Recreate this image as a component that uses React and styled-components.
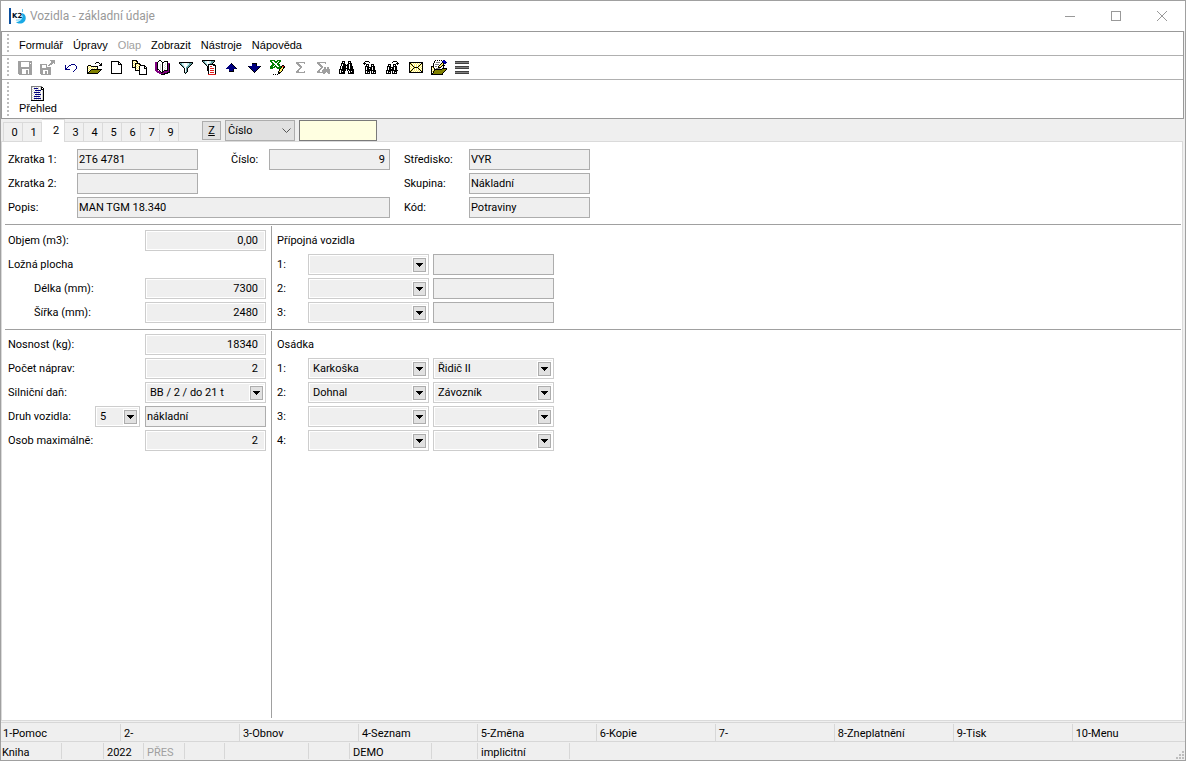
import React from "react";
import styled, { createGlobalStyle, css } from "styled-components";

const GlobalStyle = createGlobalStyle`
  * {
    box-sizing: border-box;
  }

  body {
    margin: 0;
    background: #fff;
    color: #000;
    font-family: Roboto, "DejaVu Sans", sans-serif;
    font-size: 11px;
  }

  button,
  input,
  select {
    margin: 0;
    border-radius: 0;
    color: inherit;
    font: inherit;
  }
`;

// colours of the pixel icons
const palette = {
  K: "#000000",
  W: "#ffffff",
  G: "#a0a0a0",
  D: "#404040",
  M: "#808080",
  N: "#000080",
  B: "#0000d0",
  Y: "#fff060",
  O: "#808000",
  P: "#800080",
  T: "#5f9ea0",
  C: "#c8f0f0",
  R: "#e02020",
  E: "#008000",
  L: "#d8d8d8",
};

const icons = {
  save: [
    "GGGGGGGGGGGGGG",
    "GGG........GGG",
    "GGG........G.G",
    "GGG........GGG",
    "GGG........GGG",
    "GGG........GGG",
    "GGGGGGGGGGGGGG",
    "GGGGGGGGGGGGGG",
    "GGGG.......GGG",
    "GGGG....GG.GGG",
    "GGGG....GG.GGG",
    "GGGG....GG.GGG",
    "GGGG....GG.GGG",
    ".GGGGGGGGGGGGG",
  ],
  saveExit: [
    "..........GGGGG",
    "...........GGGG",
    "...........GGGG",
    "..........GGG.G",
    "GGGGGGG..GGG...",
    "GG....G.GG.....",
    "GG....G........",
    "GG....GGGGG....",
    "GGGGGGGGGGG....",
    "GGGGGGGGGGG....",
    "GGG.....GGG....",
    "GGG..GG.GGG....",
    "GGG..GG.GGG....",
    "GGG..GG.GGG....",
    ".GGGGGGGGGG....",
  ],
  undo: [
    "......NNNN..",
    "N...NN....N.",
    "N..N.......N",
    "N.N........N",
    "NN.........N",
    "NNNNN.....N.",
    ".........N..",
    "........N...",
  ],
  open: [
    "..........KKK...",
    ".........K...K.K",
    "..............KK",
    "..KKK........KKK",
    ".KYWYKKKKKKK....",
    ".KWYWYWYWYWK....",
    ".KYWYWYWYWYK....",
    ".KWYWKKKKKKKKKKK",
    ".KYWKOOOOOOOOOK.",
    ".KWKOOOOOOOOOK..",
    ".KKOOOOOOOOOK...",
    ".KKKKKKKKKKK....",
  ],
  page: [
    "KKKKKKKK...",
    "KWWWWWWKK..",
    "KWWWWWWKWK.",
    "KWWWWWWKKKK",
    "KWWWWWWWWWK",
    "KWWWWWWWWWK",
    "KWWWWWWWWWK",
    "KWWWWWWWWWK",
    "KWWWWWWWWWK",
    "KWWWWWWWWWK",
    "KWWWWWWWWWK",
    "KWWWWWWWWWK",
    "KKKKKKKKKKK",
  ],
  copies: [
    "KKKKK..........",
    "KYWYKK.........",
    "KWYWYK.........",
    "KYWKKKKK.......",
    "KWYKYWYKK......",
    "KYWKWYWYKKKKK..",
    "KWYKYWYKWWWWKK.",
    "KKKKWYWKWWWWKWK",
    "...KYWYKWWWWKKK",
    "...KWYWKWWWWWWK",
    "...KKKKKWWWWWWK",
    ".......KWWWWWWK",
    ".......KWWWWWWK",
    ".......KWWWWWWK",
    ".......KKKKKKKK",
  ],
  book: [
    "....KK.........",
    "...KWWK..KKKK..",
    "PPKWWWWKKWWWK..",
    "PPKWWWWKWWLWKPP",
    "PPKWWLWKWWLWKPK",
    "PPKWWLWKWLWWKPK",
    "PPKWWLWKWWLWKPK",
    "PPKWWLWKWLWWKPK",
    "PPKWWLWKWWLWKPK",
    "PPKKWLWKWLWWKPK",
    "PPP.KWWKWKKKKPK",
    ".PPPPKWKKPPPPPK",
    "..PPPPKKPPPPKKK",
    "....PPPPPKKKK..",
    "......KKKK.....",
  ],
  filter: [
    "KKKKKKKKKKKKKK",
    "KTTCCWWWCCTTTK",
    ".KTCCWWWCCTTK.",
    "..KTCWWWCTTK..",
    "...KTCWCTTK...",
    "....KCWTTK....",
    ".....KWTK.....",
    ".....KWTK.....",
    ".....KWTK.....",
    ".....KWTK.....",
    ".....KTK......",
    "......K.......",
  ],
  filterDoc: [
    "KKKKKKKKKKKKK.",
    "KTTCCWWCCTTTK.",
    ".KTCCWWCCTTK..",
    "..KTCWWCTTK...",
    "...KTCKKKKKKK.",
    "....KCKWWWWKKK",
    ".....KKWRRWWWK",
    ".....KKWWWWWWK",
    ".....KKWRRRRWK",
    ".....KKWWWWWWK",
    ".....KKWRRRRWK",
    "......KWWWWWWK",
    "......KWRRRRWK",
    "......KWWWWWWK",
    "......RRRRRRRR",
  ],
  up: [
    "......K......",
    ".....NNK.....",
    "....NNNNK....",
    "...NNNNNNK...",
    "..NNNNNNNNK..",
    ".NNNNNNNNNNK.",
    "....NNNNK....",
    "....NNNNK....",
    "....KKKKK....",
  ],
  down: [
    "....KKKKK....",
    "....NNNNK....",
    "....NNNNK....",
    "KNNNNNNNNNNNK",
    ".KNNNNNNNNNK.",
    "..KNNNNNNNK..",
    "...KNNNNNK...",
    "....KNNNK....",
    ".....KNK.....",
    "......K......",
  ],
  excel: [
    "EEEEE..EEEE....",
    "EEWWEEEEWEE....",
    ".EEWWEEWEE.....",
    "..EEWWWEE......",
    "..EEEWWEEE.....",
    ".EEEWEWWEE..KK.",
    "EEEWEEEWWEEKRRK",
    "EEEEE.EEEEEKYKK",
    "EEE....EEEKYYK.",
    ".........KYYK..",
    ".........KYYK..",
    "........KYYK...",
    "........KKK....",
    "........KK.....",
    "...K.K.K.......",
  ],
  sum: [
    "GGGGGGGGG",
    "GGG.....G",
    ".GGG.....",
    "..GGG....",
    "...GGG...",
    "....GG...",
    "...GG....",
    "..GG.....",
    ".GG......",
    "GGG.....G",
    "GGGGGGGGG",
  ],
  sumSearch: [
    "GGGGGGGGG....",
    "GGG.....G....",
    ".GGG.........",
    "..GGG........",
    "...GGG.......",
    "....GG.GG.GG.",
    "...GG..GG.GG.",
    "..GG..GGGGGGG",
    ".GG..GGGGGGGG",
    "GGG..GGGGGGGG",
    "GGGGGGGGG.GGG",
    "......GG...GG",
  ],
  find: [
    "...KKK...KKK...",
    "...KWK...KWK...",
    "..KKKK...KKKK..",
    "..KWKKK.KKWKK..",
    "..KWKKKKKKWKK..",
    ".KWKKKKWKKWKKK.",
    ".KWKKKKWKKWKKK.",
    ".KWKKKKKKKWKKK.",
    "KKKKKKK.KKKKKKK",
    "KWKKKKK.KWKKKKK",
    "KWKWKK...KWKWKK",
    "KWKKKK...KWKKKK",
    "KKKKKK...KKKKKK",
  ],
  findPrev: [
    "..KKKK.......",
    ".K....K......",
    "KKK..........",
    ".K.KKK..KKK..",
    "...KWK..KWK..",
    "..KKKK..KKKK.",
    "..KWKKKKKWKK.",
    "..KWKKWKKWKK.",
    "..KWKKKKKWKK.",
    "..KKKKKKKKKKK",
    "..KWKKK.KWKKK",
    "..KWKWK.KWKWK",
    "..KKKKK.KKKKK",
  ],
  findNext: [
    ".......KKKK..",
    "......K....K.",
    "..........KKK",
    "..KKK..KKK.K.",
    "..KWK..KWK...",
    ".KKKK..KKKK..",
    ".KWKKKKKWKK..",
    ".KWKKWKKWKK..",
    ".KWKKKKKWKK..",
    "KKKKKKKKKKKK.",
    "KWKKK.KWKKK..",
    "KWKWK.KWKWK..",
    "KKKKK.KKKKK..",
  ],
  mail: [
    "KKKKKKKKKKKKKK",
    "KKYWYWYWYWYWKK",
    "KYKYWYWYWYWKYK",
    "KWYKWYWYWYKYWK",
    "KYWYKYWYWKYWYK",
    "KWYWYKKKKYWYWK",
    "KYWYKYWYWKYWYK",
    "KWYKWYWYWYKYWK",
    "KYKYWYWYWYWKYK",
    "KKYWYWYWYWYWKK",
    "KKKKKKKKKKKKKK",
  ],
  fileEdit: [
    "....K.K.K.K.NN..",
    "...KWWWWWWWNBBN.",
    "...KWMMMMWWKNBNN",
    "..KWWWWWWWKYKNN.",
    "..KWMMMMWKYYK...",
    "..KWWWWWKYYKKK..",
    "KKKWMMWKYYKWK...",
    "KYKWWWWKKKWWK...",
    "KWYKWMMMMWWKKKKK",
    "KYWKKKKKKKKOOOOK",
    "KWYKOOOOOOOOOOK.",
    "KYKOOOOOOOOOOK..",
    "KWKOOOOOOOOOK...",
    "KKOOOOOOOOOK....",
    "KKKKKKKKKKKK....",
  ],
  list: [
    "DDDDDDDDDDDDDD",
    "MMMMMMMMMMMMMM",
    "DDDDDDDDDDDDDD",
    "..............",
    "..............",
    "DDDDDDDDDDDDDD",
    "MMMMMMMMMMMMMM",
    "DDDDDDDDDDDDDD",
    "..............",
    "..............",
    "DDDDDDDDDDDDDD",
    "MMMMMMMMMMMMMM",
    "DDDDDDDDDDDDDD",
  ],
  overview: [
    "MMMMMMMMMMM..",
    "MLWLWLWLWLKK.",
    "MWLNNNNLWLKWK",
    "MLWLWLWLWLKKK",
    "MWLWNNNNNNWLK",
    "MLWLWLWLWLWLK",
    "MWLNNNNNNLWLK",
    "MLWLWLWLWLWLK",
    "MWLWNNNNNNWLK",
    "MLWLWLWLWLWLK",
    "MWLNNNNNNLWLK",
    "MLWLWLWLWLWLK",
    "MWLNNNNNNNWLK",
    "MLWLWLWLWLWLK",
    "KKKKKKKKKKKKK",
  ],
  arrow: ["KKKKKKK", ".KKKKK.", "..KKK..", "...K..."],
};

const PixelIcon = ({ name }) => {
  const rows = icons[name];
  return (
    <svg
      width={rows[0].length}
      height={rows.length}
      shapeRendering="crispEdges"
      aria-hidden="true"
    >
      {rows.map((row, y) =>
        row
          .split("")
          .map((c, x) =>
            c === "." ? null : (
              <rect key={x + "-" + y} x={x} y={y} width="1" height="1" fill={palette[c]} />
            )
          )
      )}
    </svg>
  );
};

const Window = styled.div`
  display: flex;
  flex-direction: column;
  min-height: 100vh;
  border: 1px solid #a0a0a0;
  background: #efefef;
`;

const TitleBar = styled.header`
  display: flex;
  align-items: center;
  height: 30px;
  padding-left: 8px;
  background: #fff;
`;

const Title = styled.h1`
  flex: 1;
  margin: 0 0 0 4px;
  color: #999;
  font-size: 12px;
  font-weight: 400;
  line-height: 16px;
`;

const WindowButton = styled.button`
  display: flex;
  align-items: center;
  justify-content: center;
  width: 46px;
  height: 28px;
  padding: 0;
  border: 0;
  background: transparent;
`;

const Bars = styled.div`
  margin-right: 1px;
  border: 1px solid #999;
  background: #fff;
`;

const Bar = styled.div`
  display: flex;
  align-items: center;
  height: ${(props) => (props.$tall ? "38px" : "24px")};
  padding-left: 5px;
  border-bottom: ${(props) => (props.$tall ? "0" : "1px solid #b0b0b0")};
  font-family: "Liberation Sans", Arial, sans-serif;
`;

const Grip = styled.span`
  align-self: stretch;
  width: 2px;
  margin: 2px 0;
  background: repeating-linear-gradient(#bdbdbd 0 2px, transparent 2px 4px);
`;

const Menu = styled.nav`
  display: flex;
  gap: 10px;
  margin-left: 10px;
`;

const MenuItem = styled.button`
  padding: 2px 0 0;
  border: 0;
  background: transparent;
  line-height: 16px;

  &:disabled {
    color: #a0a0a0;
  }
`;

const Tools = styled.div`
  display: flex;
  margin-left: 4px;
`;

const Tool = styled.button`
  display: flex;
  align-items: center;
  justify-content: center;
  width: 23px;
  height: 22px;
  padding: 0;
  border: 0;
  background: transparent;
`;

const OverviewButton = styled.button`
  display: flex;
  flex-direction: column;
  align-items: center;
  margin-left: 10px;
  padding: 3px 0 0;
  border: 0;
  background: transparent;
  line-height: 14px;
`;

const TabStrip = styled.div`
  display: flex;
  align-items: flex-end;
  height: 22px;
  padding-left: 2px;
`;

const Tab = styled.button`
  width: 19px;
  height: 19px;
  padding: 2px 0 0 3px;
  border: 1px solid #dadada;
  border-width: 1px 1px 0 0;
  background: #f0f0f0;
  line-height: 16px;

  &:first-child {
    width: 20px;
    border-left-width: 1px;
  }

  ${(props) =>
    props.$active &&
    css`
      z-index: 1;
      width: 23px;
      height: 23px;
      margin-bottom: -1px;
      padding: 0 0 1px 6px;
      background: #fff;
    `}
`;

const SearchTools = styled.div`
  display: flex;
  align-items: center;
  gap: 4px;
  height: 21px;
  margin-left: 23px;
`;

const ZButton = styled.button`
  width: 19px;
  height: 19px;
  padding: 0;
  border: 1px solid #adadad;
  background: #e1e1e1;
  text-decoration: underline;
`;

const SearchSelectBox = styled.span`
  position: relative;
  width: 70px;
  height: 21px;

  svg {
    position: absolute;
    top: 8px;
    right: 4px;
    pointer-events: none;
  }
`;

const SearchSelect = styled.select`
  width: 100%;
  height: 100%;
  padding: 0 2px;
  border: 1px solid #adadad;
  background: #e1e1e1;
  appearance: none;
`;

const SearchInput = styled.input`
  width: 78px;
  height: 21px;
  padding: 0 3px;
  border: 1px solid #7a7a7a;
  background: #ffffe1;
`;

const Page = styled.main`
  display: flex;
  flex: 1;
  flex-direction: column;
  margin-right: 2px;
  padding: 0 1px 2px 3px;
  border: 1px solid #dadada;
  background: #fff;
`;

const Summary = styled.section`
  display: grid;
  grid-template-columns: 69px 121px 71px 121px 79px 121px;
  grid-auto-rows: 21px;
  align-items: center;
  row-gap: 3px;
  padding: 7px 0 6px 3px;
`;

const Section = styled.section`
  display: grid;
  grid-template-columns: 267px 1fr;
  flex: ${(props) => (props.$grow ? "1" : "none")};
  border-top: 1px solid #a0a0a0;
`;

const Pane = styled.div`
  display: flex;
  flex-direction: column;
  gap: 3px;
  margin-top: 1px;
  padding: ${(props) => (props.$top === "small" ? "3px" : "4px")} 5px 6px
    ${(props) => (props.$ruled ? "3px" : "5px")};
  border-right: ${(props) => (props.$ruled ? "1px solid #a0a0a0" : "0")};
`;

const Row = styled.div`
  display: flex;
  align-items: center;
  gap: ${(props) => (props.$people ? "4px" : "5px")};
  height: 21px;
`;

const Label = styled.label`
  flex: ${(props) => (props.$narrow ? "0 0 27px" : "1")};
  padding-left: ${(props) => props.$indent || "0"};
  line-height: 20px;
  white-space: nowrap;
`;

const Heading = styled.h2`
  height: 21px;
  margin: 0;
  font-size: 11px;
  font-weight: 400;
  line-height: 22px;
`;

const TextField = styled.input`
  width: ${(props) => (props.$wide ? "100%" : "121px")};
  grid-column: ${(props) => (props.$wide ? "span 3" : "auto")};
  height: 21px;
  padding: 0 2px 1px 1px;
  border: 1px solid #adadad;
  background: #efefef;
  text-align: ${(props) => (props.$number ? "right" : "left")};
`;

const SoftField = styled.input`
  width: 121px;
  height: 21px;
  padding: 0 7px 1px 3px;
  border: 1px solid #cdcdcd;
  background: #efefef;
  box-shadow: inset 0 0 0 1px #fff;
  text-align: right;
`;

const NumberField = styled(TextField)`
  padding-right: 4px;
`;

const SelectBox = styled.span`
  position: relative;
  width: ${(props) => (props.$short ? "45px" : "121px")};
  height: 21px;
`;

const SelectInput = styled.select`
  width: 100%;
  height: 100%;
  padding: 0 18px 1px 4px;
  border: 1px solid #cdcdcd;
  background: #efefef;
  box-shadow: inset 0 0 0 1px #fff;
  appearance: none;
`;

const DropButton = styled.span`
  position: absolute;
  top: 4px;
  right: 3px;
  display: flex;
  align-items: center;
  justify-content: center;
  width: 13px;
  height: 14px;
  border: 1px solid #adadad;
  background: #e1e1e1;
  outline: 1px solid #fff;
  pointer-events: none;
`;

const Keys = styled.div`
  display: grid;
  grid-template-columns: repeat(9, minmax(0, 21fr)) minmax(0, 20fr);
  height: 20px;
  margin-top: 1px;
  border: 1px solid #d7d7d7;
  border-width: 1px 0;
`;

const Key = styled.button`
  margin: 1px 0;
  padding: 2px 0 0 3px;
  border: 0;
  border-left: 1px solid #d7d7d7;
  background: transparent;
  line-height: 16px;
  text-align: left;

  &:first-child {
    padding-left: 2px;
    border-left: 0;
  }
`;

const Status = styled.footer`
  display: flex;
  height: 18px;
`;

const StatusCell = styled.span`
  width: ${(props) => props.$width};
  height: 16px;
  margin: 1px 0;
  padding-left: ${(props) => props.$pad || "3px"};
  border-right: 1px solid #d7d7d7;
  color: ${(props) => (props.$muted ? "#a0a0a0" : "inherit")};
  line-height: 20px;
`;

const ResizeCorner = styled.span`
  align-self: flex-end;
  margin: 0 1px 1px auto;
  line-height: 0;
`;

const Select = ({ value, short, ...rest }) => (
  <SelectBox $short={short}>
    <SelectInput defaultValue={value} {...rest}>
      <option>{value}</option>
    </SelectInput>
    <DropButton>
      <PixelIcon name="arrow" />
    </DropButton>
  </SelectBox>
);

const Logo = () => (
  <svg width="17" height="16" viewBox="0 0 17 16" aria-hidden="true">
    <path d="M13 5c4 1 5 6 2 9-2 2-6 2-8 0 4 0 7-3 6-9z" fill="#19a9e5" />
    <path d="M7 12c3 1 5-1 6-4" fill="none" stroke="#a8e4f8" strokeWidth="2" />
    <path d="M13.5 1v3" stroke="#6bc5ec" />
    <rect width="2" height="16" fill="#0b4f9e" />
    <text x="3" y="10" fontSize="7" fontWeight="700" fontFamily="DejaVu Sans" fill="#001028">
      K2
    </text>
  </svg>
);

const menu = ["Formulář", "Úpravy", "Olap", "Zobrazit", "Nástroje", "Nápověda"];

const tools = [
  ["save", "Uložit"],
  ["saveExit", "Uložit a zavřít"],
  ["undo", "Zpět"],
  ["open", "Otevřít"],
  ["page", "Nový"],
  ["copies", "Kopie"],
  ["book", "Kniha"],
  ["filter", "Filtr"],
  ["filterDoc", "Filtr záznamů"],
  ["up", "Předchozí"],
  ["down", "Další"],
  ["excel", "Excel"],
  ["sum", "Součet"],
  ["sumSearch", "Součet výběru"],
  ["find", "Hledat"],
  ["findPrev", "Hledat předchozí"],
  ["findNext", "Hledat další"],
  ["mail", "Pošta"],
  ["fileEdit", "Dokumenty"],
  ["list", "Seznam"],
];

const tabs = ["0", "1", "2", "3", "4", "5", "6", "7", "9"];

const crew = [
  ["Karkoška", "Řidič II"],
  ["Dohnal", "Závozník"],
  ["", ""],
  ["", ""],
];

const keys = [
  "1-Pomoc",
  "2-",
  "3-Obnov",
  "4-Seznam",
  "5-Změna",
  "6-Kopie",
  "7-",
  "8-Zneplatnění",
  "9-Tisk",
  "10-Menu",
];

const App = () => {
  return (
    <Window>
      <GlobalStyle />
      <TitleBar>
        <Logo />
        <Title>Vozidla - základní údaje</Title>
        <WindowButton aria-label="Minimalizovat">
          <svg width="10" height="10" stroke="#999" fill="none">
            <path d="M0 5.5h10" />
          </svg>
        </WindowButton>
        <WindowButton aria-label="Maximalizovat">
          <svg width="10" height="10" stroke="#999" fill="none">
            <rect x="0.5" y="0.5" width="9" height="9" />
          </svg>
        </WindowButton>
        <WindowButton aria-label="Zavřít">
          <svg width="10" height="10" stroke="#999" fill="none">
            <path d="M0 0l10 10M10 0L0 10" />
          </svg>
        </WindowButton>
      </TitleBar>

      <Bars>
        <Bar>
          <Grip />
          <Menu>
            {menu.map((item) => (
              <MenuItem key={item} disabled={item === "Olap"}>
                {item}
              </MenuItem>
            ))}
          </Menu>
        </Bar>
        <Bar>
          <Grip />
          <Tools>
            {tools.map(([name, title]) => (
              <Tool key={name} aria-label={title}>
                <PixelIcon name={name} />
              </Tool>
            ))}
          </Tools>
        </Bar>
        <Bar $tall>
          <Grip />
          <OverviewButton>
            <PixelIcon name="overview" />
            Přehled
          </OverviewButton>
        </Bar>
      </Bars>

      <TabStrip>
        {tabs.map((tab) => (
          <Tab key={tab} $active={tab === "2"}>
            {tab}
          </Tab>
        ))}
        <SearchTools>
          <ZButton>Z</ZButton>
          <SearchSelectBox>
            <SearchSelect aria-label="Hledat podle" defaultValue="Číslo">
              <option>Číslo</option>
            </SearchSelect>
            <svg width="9" height="6" fill="none" stroke="#555">
              <path d="M0.5 0.5l4 4 4-4" />
            </svg>
          </SearchSelectBox>
          <SearchInput aria-label="Hledaná hodnota" />
        </SearchTools>
      </TabStrip>

      <Page>
        <Summary>
          <Label htmlFor="short1">Zkratka 1:</Label>
          <TextField id="short1" defaultValue="2T6 4781" />
          <Label htmlFor="number" $indent="33px">
            Číslo:
          </Label>
          <NumberField id="number" $number defaultValue="9" />
          <Label htmlFor="centre" $indent="14px">
            Středisko:
          </Label>
          <TextField id="centre" defaultValue="VYR" />

          <Label htmlFor="short2">Zkratka 2:</Label>
          <TextField id="short2" />
          <span />
          <span />
          <Label htmlFor="group" $indent="14px">
            Skupina:
          </Label>
          <TextField id="group" defaultValue="Nákladní" />

          <Label htmlFor="desc">Popis:</Label>
          <TextField id="desc" $wide defaultValue="MAN TGM 18.340" />
          <Label htmlFor="code" $indent="14px">
            Kód:
          </Label>
          <TextField id="code" defaultValue="Potraviny" />
        </Summary>

        <Section>
          <Pane $ruled>
            <Row>
              <Label htmlFor="volume">Objem (m3):</Label>
              <SoftField id="volume" defaultValue="0,00" />
            </Row>
            <Heading>Ložná plocha</Heading>
            <Row>
              <Label htmlFor="length" $indent="26px">
                Délka (mm):
              </Label>
              <SoftField id="length" defaultValue="7300" />
            </Row>
            <Row>
              <Label htmlFor="width" $indent="26px">
                Šířka (mm):
              </Label>
              <SoftField id="width" defaultValue="2480" />
            </Row>
          </Pane>
          <Pane>
            <Heading>Přípojná vozidla</Heading>
            {[1, 2, 3].map((n) => (
              <Row key={n} $people>
                <Label htmlFor={"trailer" + n} $narrow>
                  {n}:
                </Label>
                <Select id={"trailer" + n} value="" />
                <TextField aria-label={"Název vozidla " + n} />
              </Row>
            ))}
          </Pane>
        </Section>

        <Section $grow>
          <Pane $ruled $top="small">
            <Row>
              <Label htmlFor="load">Nosnost (kg):</Label>
              <SoftField id="load" defaultValue="18340" />
            </Row>
            <Row>
              <Label htmlFor="axles">Počet náprav:</Label>
              <SoftField id="axles" defaultValue="2" />
            </Row>
            <Row>
              <Label htmlFor="tax">Silniční daň:</Label>
              <Select id="tax" value="BB / 2 / do 21 t" />
            </Row>
            <Row>
              <Label htmlFor="kind">Druh vozidla:</Label>
              <Select id="kind" short value="5" />
              <TextField aria-label="Název druhu" defaultValue="nákladní" />
            </Row>
            <Row>
              <Label htmlFor="persons">Osob maximálně:</Label>
              <SoftField id="persons" defaultValue="2" />
            </Row>
          </Pane>
          <Pane $top="small">
            <Heading>Osádka</Heading>
            {crew.map(([name, role], i) => (
              <Row key={i} $people>
                <Label htmlFor={"crew" + i} $narrow>
                  {i + 1}:
                </Label>
                <Select id={"crew" + i} value={name} />
                <Select aria-label={"Funkce " + (i + 1)} value={role} />
              </Row>
            ))}
          </Pane>
        </Section>
      </Page>

      <Keys>
        {keys.map((key) => (
          <Key key={key}>{key}</Key>
        ))}
      </Keys>
      <Status>
        <StatusCell $width="61px" $pad="1px">
          Kniha
        </StatusCell>
        <StatusCell $width="42px" />
        <StatusCell $width="40px">2022</StatusCell>
        <StatusCell $width="41px" $muted>
          PŘES
        </StatusCell>
        <StatusCell $width="40px" />
        <StatusCell $width="84px" />
        <StatusCell $width="41px" />
        <StatusCell $width="82px">DEMO</StatusCell>
        <StatusCell $width="46px" />
        <StatusCell $width="92px">implicitní</StatusCell>
        <ResizeCorner>
          <svg width="8" height="8" fill="#bdbdbd" shapeRendering="crispEdges">
            <path d="M6 0h2v2h-2zM3 3h2v2h-2zM6 3h2v2h-2zM0 6h2v2h-2zM3 6h2v2h-2zM6 6h2v2h-2z" />
          </svg>
        </ResizeCorner>
      </Status>
    </Window>
  );
};

export default App;
